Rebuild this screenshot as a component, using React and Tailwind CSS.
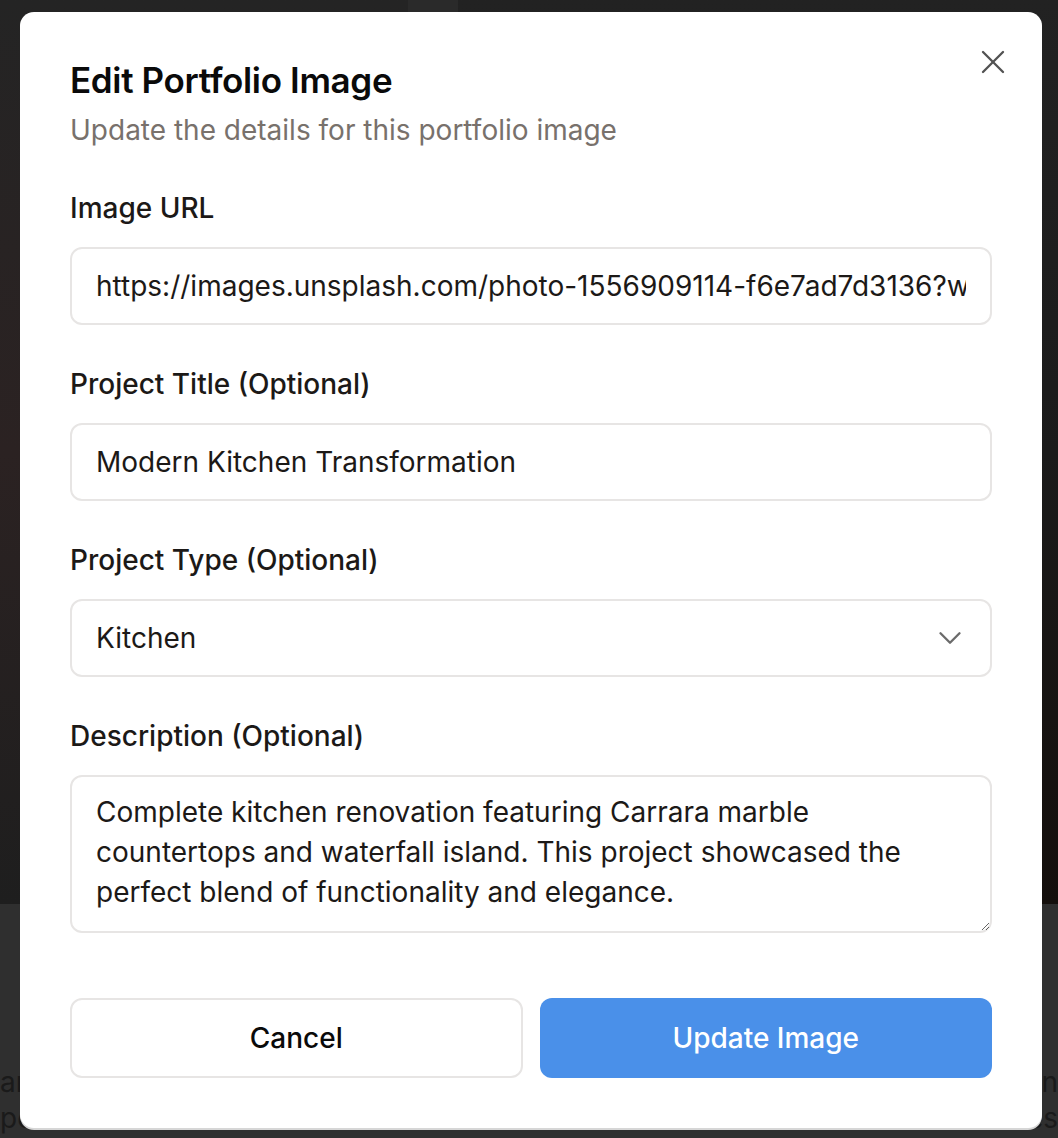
import { X, ChevronDown } from 'lucide-react'

const fields = {
  url: 'https://images.unsplash.com/photo-1556909114-f6e7ad7d3136?w=800&q=80',
  title: 'Modern Kitchen Transformation',
  description:
    'Complete kitchen renovation featuring Carrara marble countertops and waterfall island. This project showcased the perfect blend of functionality and elegance.',
}

const projectTypes = ['Kitchen', 'Bathroom', 'Living Room', 'Bedroom', 'Exterior']

function Label({ children }) {
  return (
    <label className="mb-[19px] block text-[28px] font-medium leading-[40px] text-[#1c1917]">
      {children}
    </label>
  )
}

const inputClass =
  'block h-[78px] w-full rounded-[12px] border-2 border-[#e7e5e4] bg-white px-[24px] text-[28px] text-[#1c1917] outline-none'

function Backdrop() {
  return (
    <div className="flex h-[1138px] flex-col bg-[#2f2f2f]">
      <div className="grid h-[904px] grid-cols-[408px_50px_1fr] bg-[#1f1f1f]">
        <div className="bg-gradient-to-b from-[#242424] via-[#2b2222] to-[#1e1e1e]" />
        <div className="bg-[#2a2a2a]" />
        <div className="bg-gradient-to-b from-[#222] via-[#1b1b1b] to-[#140f0c]" />
      </div>
      <div className="flex justify-between pt-[160px] text-[28px] leading-[36px] text-[#1a1a1a]">
        <div>
          <p>ar</p>
          <p>pe</p>
        </div>
        <div className="text-right">
          <p>n</p>
          <p>es</p>
        </div>
      </div>
    </div>
  )
}

export default function App() {
  return (
    <div
      className="relative h-[1138px] w-full overflow-hidden"
      style={{ fontFamily: 'Inter, "Noto Sans", sans-serif' }}
    >
      <Backdrop />

      <div className="absolute left-[20px] top-[12px] w-[1022px] rounded-[14px] bg-white px-[50px] pb-[50px] pt-[46px] shadow-[0_2px_0_#d6d6d6]">
        <button
          type="button"
          className="absolute right-[29px] top-[30px] flex h-[40px] w-[40px] items-center justify-center text-[#525252]"
        >
          <X size={40} strokeWidth={1.4} />
        </button>

        <h2 className="text-[35px] font-semibold leading-[44px] tracking-[-0.01em] text-[#0a0a0a]">
          Edit Portfolio Image
        </h2>
        <p className="mt-[8px] text-[28px] leading-[40px] text-[#78716c]">
          Update the details for this portfolio image
        </p>

        <div className="mt-[38px] flex flex-col gap-[39px]">
          <div>
            <Label>Image URL</Label>
            <input className={inputClass} defaultValue={fields.url} />
          </div>

          <div>
            <Label>Project Title (Optional)</Label>
            <input className={inputClass} defaultValue={fields.title} />
          </div>

          <div>
            <Label>Project Type (Optional)</Label>
            <div className="relative">
              <select className={`${inputClass} appearance-none`} defaultValue="Kitchen">
                {projectTypes.map((type) => (
                  <option key={type}>{type}</option>
                ))}
              </select>
              <ChevronDown
                size={38}
                strokeWidth={1.5}
                className="pointer-events-none absolute right-[23px] top-[20px] text-[#6b6b6b]"
              />
            </div>
          </div>

          <div>
            <Label>Description (Optional)</Label>
            <textarea
              rows={3}
              className="block h-[158px] w-full rounded-[12px] border-2 border-[#e7e5e4] bg-white px-[24px] py-[15px] text-[28px] leading-[40px] text-[#1c1917] outline-none"
              defaultValue={fields.description}
            />
          </div>
        </div>

        <div className="mt-[65px] grid grid-cols-2 gap-[17px]">
          <button
            type="button"
            className="h-[80px] rounded-[12px] border-2 border-[#e7e5e4] bg-white text-[28px] font-medium text-[#0a0a0a]"
          >
            Cancel
          </button>
          <button
            type="button"
            className="h-[80px] rounded-[12px] bg-[#4a90e9] text-[28px] font-medium text-white"
          >
            Update Image
          </button>
        </div>
      </div>
    </div>
  )
}
